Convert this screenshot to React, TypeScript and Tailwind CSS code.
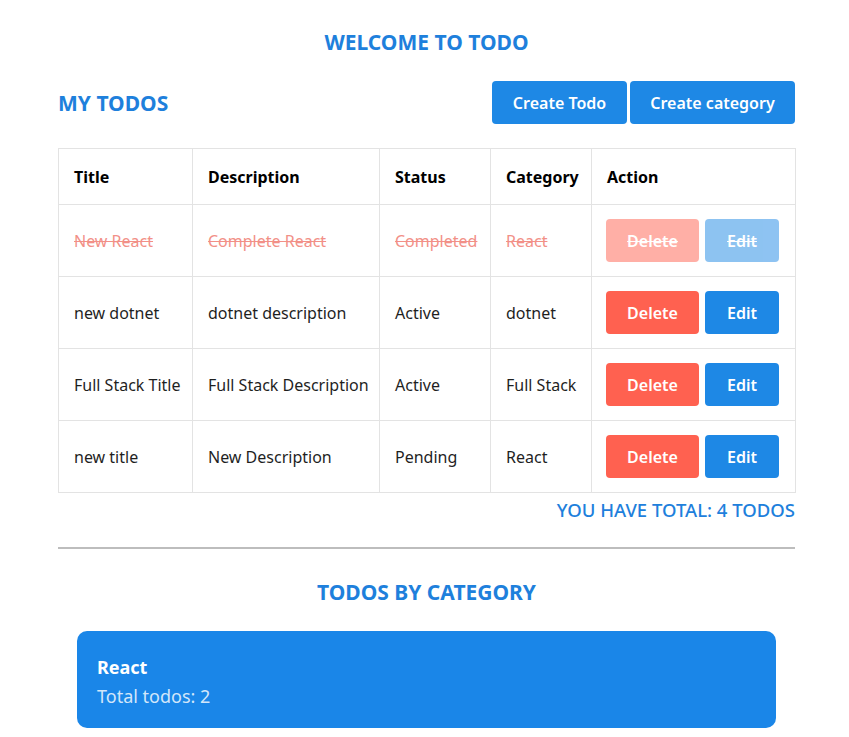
import React from "react";

type Todo = { title: string; description: string; status: string; category: string; done?: boolean };

const todos: Todo[] = [
  { title: "New React", description: "Complete React", status: "Completed", category: "React", done: true },
  { title: "new dotnet", description: "dotnet description", status: "Active", category: "dotnet" },
  { title: "Full Stack Title", description: "Full Stack Description", status: "Active", category: "Full Stack" },
  { title: "new title", description: "New Description", status: "Pending", category: "React" },
];

export default function App() {
  return (
    <div className="min-h-screen w-full bg-white text-[#1f1f1f]" style={{ fontFamily: '"Noto Sans", "Open Sans", sans-serif' }}>
      <div className="ml-[58px] w-[737px] pt-[27px]">
        <h1 className="text-center text-[21px] leading-[30px] font-bold text-[#1e80dc]">WELCOME TO TODO</h1>

        <div className="mt-[24px] flex h-[43px] items-center justify-between">
          <h2 className="text-[21px] leading-[30px] font-bold text-[#1e80dc]">MY TODOS</h2>
          <div className="flex gap-[3px]">
            <button className="h-[43px] w-[135px] rounded-[4px] bg-[#1e88e5] text-[16px] font-semibold text-white">Create Todo</button>
            <button className="h-[43px] w-[165px] rounded-[4px] bg-[#1e88e5] text-[16px] font-semibold text-white">Create category</button>
          </div>
        </div>

        <table className="mt-[24px] w-[737px] table-fixed border-collapse text-[16px]">
          <colgroup>
            <col className="w-[134px]" />
            <col className="w-[187px]" />
            <col className="w-[111px]" />
            <col className="w-[101px]" />
            <col className="w-[204px]" />
          </colgroup>
          <thead>
            <tr className="h-[56px]">
              {["Title", "Description", "Status", "Category", "Action"].map((h) => (
                <th key={h} className="border border-[#e3e3e3] px-[15px] text-left font-bold text-black">{h}</th>
              ))}
            </tr>
          </thead>
          <tbody>
            {todos.map((t, i) => {
              const cell = t.done
                ? "border border-[#e3e3e3] px-[15px] text-[#f29087] line-through whitespace-nowrap"
                : "border border-[#e3e3e3] px-[15px] text-[#1f1f1f] whitespace-nowrap";
              return (
                <tr key={i} className="h-[72px]">
                  <td className={cell}>{t.title}</td>
                  <td className={cell}>{t.description}</td>
                  <td className={cell}>{t.status}</td>
                  <td className={cell}>{t.category}</td>
                  <td className="border border-[#e3e3e3] px-[14px]">
                    <div className={t.done ? "flex gap-[6px] opacity-50" : "flex gap-[6px]"}>
                      <button className={t.done ? "h-[43px] w-[93px] rounded-[4px] bg-[#ff6150] text-[16px] font-semibold text-white line-through" : "h-[43px] w-[93px] rounded-[4px] bg-[#ff6150] text-[16px] font-semibold text-white"}>Delete</button>
                      <button className={t.done ? "h-[43px] w-[74px] rounded-[4px] bg-[#1e88e5] text-[16px] font-semibold text-white line-through" : "h-[43px] w-[74px] rounded-[4px] bg-[#1e88e5] text-[16px] font-semibold text-white"}>Edit</button>
                    </div>
                  </td>
                </tr>
              );
            })}
          </tbody>
        </table>

        <p className="mt-[5px] text-right text-[18.5px] leading-[24px] font-medium text-[#1e80dc]">YOU HAVE TOTAL: 4 TODOS</p>

        <hr className="mt-[25px] border-0 border-t-2 border-[#bdbdbd]" />

        <h2 className="mt-[28px] text-center text-[21px] leading-[30px] font-bold text-[#1e80dc]">TODOS BY CATEGORY</h2>

        <div className="mx-[19px] mt-[24px] rounded-[10px] bg-[#1a86e8] px-[20px] pt-[24px] pb-[20px]">
          <div className="text-[18px] leading-[24px] font-bold text-white">React</div>
          <div className="mt-[5px] text-[18px] leading-[24px] text-[#d2e6fa]">Total todos: 2</div>
        </div>
      </div>
    </div>
  );
}
